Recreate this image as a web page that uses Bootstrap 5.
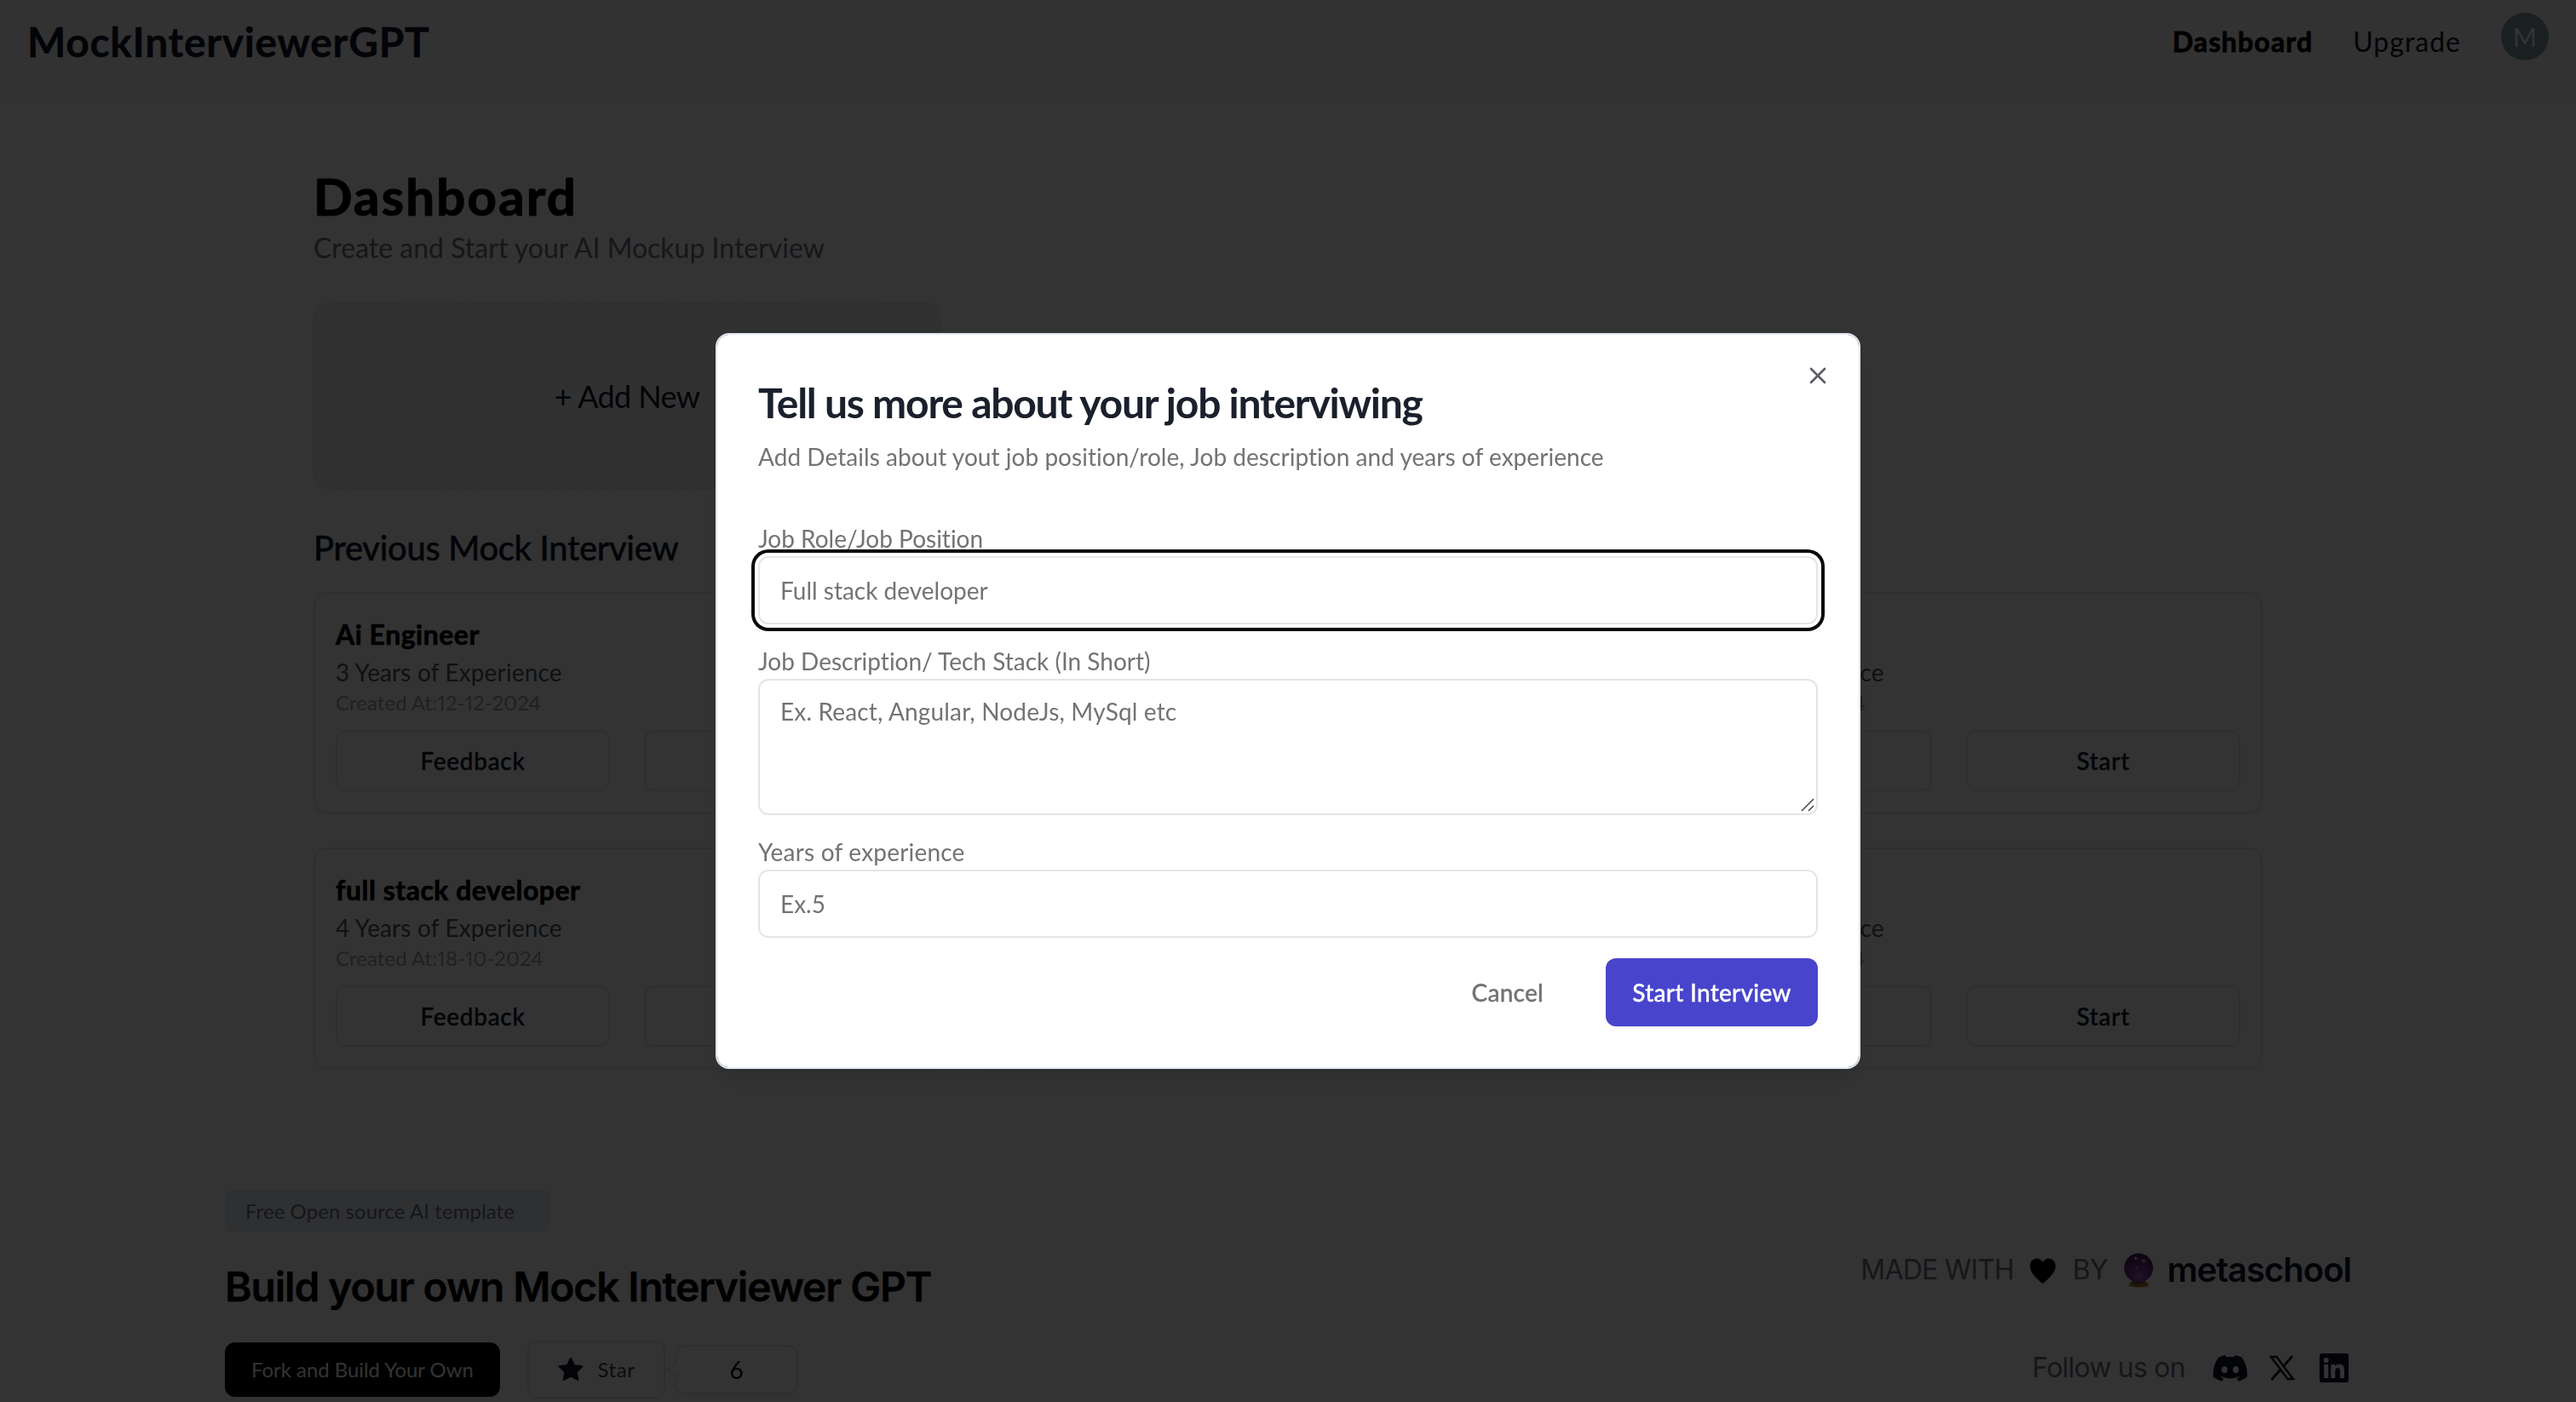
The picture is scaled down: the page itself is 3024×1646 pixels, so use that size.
<!DOCTYPE html>
<html lang="en">
<head>
  <meta charset="UTF-8">
  <meta name="viewport" content="width=device-width, initial-scale=1">
  <title>MockInterviewerGPT</title>
  <link href="https://cdn.jsdelivr.net/npm/bootstrap@5.3.2/dist/css/bootstrap.min.css" rel="stylesheet">
  <style>
    body {
      font-family: Lato, "Noto Sans", sans-serif;
      font-variant-ligatures: none;
      font-size: 28px;
      line-height: 40px;
      color: #0f172a;
      background-color: #fff;
      height: 100vh;
      overflow: hidden;
    }

    /* Header */
    .top-bar {
      height: 118px;
      padding: 0 32px;
      background-color: #f8f8f8;
    }
    .brand {
      font-size: 48px;
      font-weight: 700;
      line-height: 98px;
      letter-spacing: .66px;
      -webkit-text-stroke: .4px #0f172a;
    }
    .menu {
      gap: 47px;
      font-size: 32px;
      line-height: 98px;
      letter-spacing: 1px;
    }
    .menu a {
      color: #0f172a;
      text-decoration: none;
    }
    .menu a.current {
      color: #000;
      font-weight: 700;
      letter-spacing: 1.15px;
      -webkit-text-stroke: .8px #000;
    }
    .avatar {
      width: 56px;
      height: 56px;
      margin-top: 15px;
      background-color: #829bab;
      color: #fff;
      font-size: 30px;
      line-height: 56px;
      letter-spacing: 0;
    }

    /* Dashboard */
    .page {
      width: 2288px;
      margin: 0 auto;
      padding-top: 76px;
    }
    .page-title {
      font-size: 60px;
      font-weight: 700;
      line-height: 73px;
      letter-spacing: 2.2px;
      color: #000;
      -webkit-text-stroke: 1.2px #000;
    }
    .page-sub {
      font-size: 32px;
      line-height: 48px;
      color: #6b7280;
    }
    .three-cols {
      display: grid;
      grid-template-columns: repeat(3, 1fr);
      gap: 40px;
    }
    .add-new {
      height: 220px;
      margin-top: 40px;
      border: 2px dashed #e8e8e8;
      border-radius: 16px;
      background-color: #f5f5f5;
      font-size: 36px;
      letter-spacing: -.6px;
    }
    .section-title {
      margin: 40px 0 24px;
      font-size: 40px;
      font-weight: 500;
      line-height: 56px;
      letter-spacing: -.38px;
      -webkit-text-stroke: .4px #0f172a;
    }
    .interview {
      padding: 24px;
      border: 2px solid #e5e7eb;
      border-radius: 16px;
      box-shadow: 0 2px 4px rgba(0,0,0,.05);
    }
    .interview h3 {
      font-size: 32px;
      font-weight: 700;
      line-height: 48px;
      letter-spacing: .5px;
      color: #000;
      -webkit-text-stroke: .7px #000;
    }
    .interview .years {
      letter-spacing: .14px;
      color: #4b5563;
    }
    .interview .created {
      font-size: 24px;
      font-variant-numeric: proportional-nums;
      line-height: 32px;
      letter-spacing: .05px;
      color: #9ca3af;
    }
    .interview .actions {
      gap: 40px;
      margin-top: 16px;
    }
    .interview .btn {
      flex: 1 1 0;
      height: 72px;
      padding: 0;
      border: 2px solid #e5e7eb;
      border-radius: 12px;
      font-size: 28px;
      font-weight: 500;
      letter-spacing: .7px;
      color: #0f172a;
      -webkit-text-stroke: .4px #0f172a;
    }

    /* Footer */
    .site-footer {
      width: 2496px;
      margin: 142px auto 0;
    }
    .tag {
      width: 381px;
      height: 49px;
      padding-left: 24px;
      border-radius: 6px;
      background-color: #ebf0fa;
      font-size: 24px;
      line-height: 49px;
      letter-spacing: .07px;
      color: #6b7280;
    }
    .build-title {
      margin-top: 29px;
      font-family: Inter, sans-serif;
      font-size: 48px;
      font-weight: 600;
      line-height: 72px;
      letter-spacing: -1.16px;
      color: #000;
      -webkit-text-stroke: .4px #000;
    }
    .build-row {
      margin-top: 27px;
      font-size: 24px;
    }
    .fork {
      width: 323px;
      height: 64px;
      border-radius: 12px;
      background-color: #000;
      color: #fff;
      letter-spacing: -.05px;
    }
    .star-box {
      width: 162px;
      height: 68px;
      margin-left: 32px;
      gap: 15px;
      border: 2px solid #e5e7eb;
      border-radius: 12px;
      letter-spacing: .6px;
      color: #374151;
    }
    .count-box {
      width: 145px;
      height: 58px;
      margin-left: -1px;
      border: 2px solid #e5e7eb;
      border-radius: 12px;
      box-shadow: 0 2px 4px rgba(0,0,0,.08);
      font-size: 28px;
      color: #000;
    }
    .count-tip {
      position: relative;
      z-index: 1;
      margin-right: -2px;
    }
    .credits {
      padding-top: 70px;
      gap: 67px;
      font-family: Inter, sans-serif;
      font-size: 32px;
      line-height: 48px;
      letter-spacing: -.8px;
      color: #6b7280;
    }
    .credits .heart {
      margin: 2px 19px 0 18px;
    }
    .credits .ball {
      margin: 0 16px 0 19px;
    }
    .credits .school {
      font-size: 40px;
      font-weight: 600;
      letter-spacing: -1px;
      color: #0f172a;
    }
    .credits .discord {
      margin-left: 33px;
    }
    .credits .x-logo {
      margin: 0 29px 0 26px;
    }
    .credits .linkedin {
      margin-right: 3px;
    }

    /* Dialog */
    .modal-backdrop.show {
      opacity: .8;
    }
    .modal-dialog {
      max-width: 1344px;
    }
    .modal-content {
      padding: 48px;
      border: 2px solid #e2e8f0;
      border-radius: 16px;
      box-shadow: 0 20px 30px -6px rgba(0,0,0,.1), 0 8px 12px -8px rgba(0,0,0,.1);
      color: #737373;
    }
    .dialog-title {
      font-size: 48px;
      font-weight: 700;
      line-height: 64px;
      letter-spacing: -1.24px;
      color: #1a202c;
    }
    .dialog-desc {
      margin: 11px 0 57px;
      letter-spacing: .04px;
    }
    .dialog-close {
      position: absolute;
      top: 32px;
      right: 32px;
      color: #5b5d69;
    }
    .modal-content label {
      display: block;
      line-height: 38px;
      padding-bottom: 2px;
    }
    .field {
      margin-bottom: 24px;
    }
    .field .form-control {
      height: 80px;
      padding: 18px 24px;
      border: 2px solid #e5e5e5;
      border-radius: 12px;
      font-size: 28px;
      line-height: 40px;
      box-shadow: none;
    }
    .field .form-control::placeholder {
      color: #737373;
    }
    .field .form-control.is-active {
      box-shadow: 0 0 0 4px #fff, 0 0 0 8px #0a0a0a;
    }
    .field textarea.form-control {
      height: 160px;
      padding-top: 16px;
      letter-spacing: .16px;
      resize: none;
    }
    .field-years {
      letter-spacing: .2px;
    }
    .grip {
      position: absolute;
      right: 4px;
      bottom: 4px;
    }
    .dialog-actions {
      gap: 41px;
    }
    .modal-content .btn {
      height: 80px;
      padding: 0 32px;
      border: 0;
      border-radius: 12px;
      font-size: 28px;
      font-weight: 500;
      letter-spacing: .25px;
      color: #737373;
      -webkit-text-stroke: .3px currentColor;
    }
    .modal-content .btn-start {
      width: 249px;
      padding: 0;
      background-color: #4845cc;
      color: #fff;
    }
  </style>
</head>
<body>

  <!-- Header -->
  <header class="top-bar d-flex justify-content-between align-items-start">
    <div class="brand">MockInterviewerGPT</div>
    <nav class="menu d-flex align-items-start">
      <a class="current" href="#">Dashboard</a>
      <a href="#">Upgrade</a>
      <div class="avatar rounded-circle text-center">M</div>
    </nav>
  </header>

  <!-- Dashboard -->
  <main class="page">
    <h1 class="page-title mb-0">Dashboard</h1>
    <p class="page-sub mb-0">Create and Start your AI Mockup Interview</p>
    <div class="three-cols">
      <div class="add-new d-flex align-items-center justify-content-center">+ Add New</div>
    </div>
    <h2 class="section-title">Previous Mock Interview</h2>
    <div class="three-cols" id="interviews"></div>
  </main>

  <!-- Footer -->
  <footer class="site-footer d-flex justify-content-between align-items-start">
    <div>
      <div class="tag">Free Open source AI template</div>
      <h2 class="build-title mb-0">Build your own Mock Interviewer GPT</h2>
      <div class="build-row d-flex align-items-center">
        <div class="fork d-flex align-items-center justify-content-center"><span>Fork and Build Your Own</span></div>
        <div class="star-box d-flex align-items-center justify-content-center">
          <svg width="32" height="32" viewBox="0 0 24 24" fill="#0f172a" stroke="#0f172a" stroke-width="1.4" stroke-linejoin="round"><path d="M12 1.9l3.1 6.3 7 1-5 4.9 1.2 6.9-6.3-3.2-6.2 3.2 1.2-6.9-5.1-4.9 7-1z"/></svg>
          <span>Star</span>
        </div>
        <svg class="count-tip" width="14" height="18" viewBox="0 0 14 18" fill="#fff" stroke="#e5e7eb" stroke-width="2"><path d="M14 1.500L1.500 9L14 16.500"/></svg>
        <div class="count-box d-flex align-items-center justify-content-center">6</div>
      </div>
    </div>
    <div class="credits d-flex flex-column align-items-end">
      <div class="d-flex align-items-center">
        <span>MADE WITH</span>
        <svg class="heart" width="32" height="30" viewBox="0 0 34 32" fill="#000"><path d="M17 32C10 26 1 18.500 1 10C1 4.500 4.800.500 9.500.500c3.200 0 5.900 1.700 7.500 4.500C18.600 2.200 21.300.500 24.500.500 29.200.500 33 4.500 33 10c0 8.500-9 16-16 22z"/></svg>
        <span>BY</span>
        <svg class="ball" width="35" height="41" viewBox="0 0 36 42">
          <defs>
            <radialGradient id="orb" cx="50%" cy="75%" r="75%">
              <stop offset="0" stop-color="#a060b8"/>
              <stop offset=".5" stop-color="#702c86"/>
              <stop offset="1" stop-color="#3c1250"/>
            </radialGradient>
          </defs>
          <path d="M9 34h18l3.500 5.500c-6 2.500-19 2.500-25 0z" fill="#a8782a"/>
          <circle cx="18" cy="18" r="17.500" fill="url(#orb)"/>
          <ellipse cx="18" cy="36" rx="8" ry="1.500" fill="#6a4320"/>
          <circle cx="14.500" cy="6.500" r="1.700" fill="#e9c8f2"/>
          <circle cx="24" cy="9.500" r="2.500" fill="#b58ac2"/>
          <circle cx="15.500" cy="17.500" r="1.300" fill="#c99ad6"/>
        </svg>
        <span class="school">metaschool</span>
      </div>
      <div class="d-flex align-items-center">
        <span>Follow us on</span>
        <svg class="discord" width="40" height="31" viewBox="0 0 24 18.500" fill="#0f172a"><path d="M20.300 1.600A19.800 19.800 0 0 0 15.400 0c-.2.400-.45.900-.62 1.300a18.300 18.300 0 0 0-5.500 0A12.600 12.600 0 0 0 8.640 0 19.700 19.700 0 0 0 3.700 1.600C.54 6.200-.32 10.800.1 15.300a19.900 19.900 0 0 0 6 3.050c.5-.65.92-1.350 1.280-2.080-.68-.25-1.320-.57-1.930-.94l.47-.37a14.200 14.200 0 0 0 12.150 0l.48.37c-.6.37-1.260.69-1.940.94.36.73.79 1.430 1.280 2.080a19.800 19.800 0 0 0 6-3.050c.5-5.200-.84-9.700-3.590-13.700zM8 12.500c-1.180 0-2.150-1.100-2.150-2.400S6.800 7.700 8 7.700s2.170 1.100 2.150 2.400c0 1.300-.95 2.400-2.150 2.400zm8 0c-1.190 0-2.160-1.100-2.160-2.400S14.800 7.700 16 7.700s2.170 1.100 2.150 2.400c0 1.300-.95 2.400-2.150 2.400z"/></svg>
        <svg class="x-logo" width="30" height="30" viewBox="0 0 30 30" fill="none" stroke="#0f172a"><path d="M2 2h6.500l19.500 26h-6.500z" stroke-width="2.400"/><path d="M27 1L17 12.700M12.600 17.500L2.500 29" stroke-width="2.800"/></svg>
        <svg class="linkedin" width="34" height="34" viewBox="0 0 34 34"><rect width="34" height="34" rx="2.500" fill="#0f172a"/><g fill="#fff"><circle cx="7.700" cy="8" r="3"/><path d="M5.200 13h5v16h-5zM13.300 13h4.800v2.200c.9-1.600 2.700-2.600 5-2.600 4.600 0 5.900 3 5.900 7.400v9h-5v-8c0-2.200-.3-4-2.700-4s-3 1.900-3 3.900V29h-5z"/></g></svg>
      </div>
    </div>
  </footer>

  <!-- New interview dialog -->
  <div class="modal-backdrop show"></div>
  <div class="modal show d-block" tabindex="-1" role="dialog">
    <div class="modal-dialog modal-dialog-centered">
      <div class="modal-content">
        <svg class="dialog-close" width="32" height="32" viewBox="0 0 24 24" fill="none" stroke="currentColor" stroke-width="2" stroke-linecap="round"><path d="M18 6L6 18M6 6l12 12"/></svg>
        <h2 class="dialog-title mb-0">Tell us more about your job interviwing</h2>
        <p class="dialog-desc">Add Details about yout job position/role, Job description and years of experience</p>
        <div class="field">
          <label for="role">Job Role/Job Position</label>
          <input type="text" id="role" class="form-control is-active" placeholder="Full stack developer">
        </div>
        <div class="field position-relative">
          <label for="stack">Job Description/ Tech Stack (In Short)</label>
          <textarea id="stack" class="form-control" placeholder="Ex. React, Angular, NodeJs, MySql etc"></textarea>
          <svg class="grip" width="16" height="16" viewBox="0 0 16 16" stroke="#444" stroke-width="1.500"><path d="M1 15L15 1M9 15l6-6"/></svg>
        </div>
        <div class="field field-years">
          <label for="years">Years of experience</label>
          <input type="text" id="years" class="form-control" placeholder="Ex.5">
        </div>
        <div class="dialog-actions d-flex justify-content-end">
          <button type="button" class="btn btn-cancel">Cancel</button>
          <button type="button" class="btn btn-start">Start Interview</button>
        </div>
      </div>
    </div>
  </div>

  <script src="https://cdn.jsdelivr.net/npm/bootstrap@5.3.2/dist/js/bootstrap.bundle.min.js"></script>
  <script>
    const interviews = [
      { role: 'Ai Engineer', years: 3, created: '12-12-2024' },
      { role: 'Ai Engineer', years: 3, created: '12-12-2024' },
      { role: 'Developer', years: 3, created: '18-10-2024' },
      { role: 'full stack developer', years: 4, created: '18-10-2024' },
      { role: 'Developer', years: 3, created: '18-10-2024' },
      { role: 'Developer', years: 3, created: '12-10-2024' }
    ];

    document.getElementById('interviews').innerHTML = interviews.map(item => `
      <div class="interview">
        <h3 class="mb-0">${item.role}</h3>
        <div class="years">${item.years} Years of Experience</div>
        <div class="created">Created At:${item.created}</div>
        <div class="actions d-flex">
          <button type="button" class="btn">Feedback</button>
          <button type="button" class="btn">Start</button>
        </div>
      </div>
    `).join('');
  </script>

</body>
</html>
